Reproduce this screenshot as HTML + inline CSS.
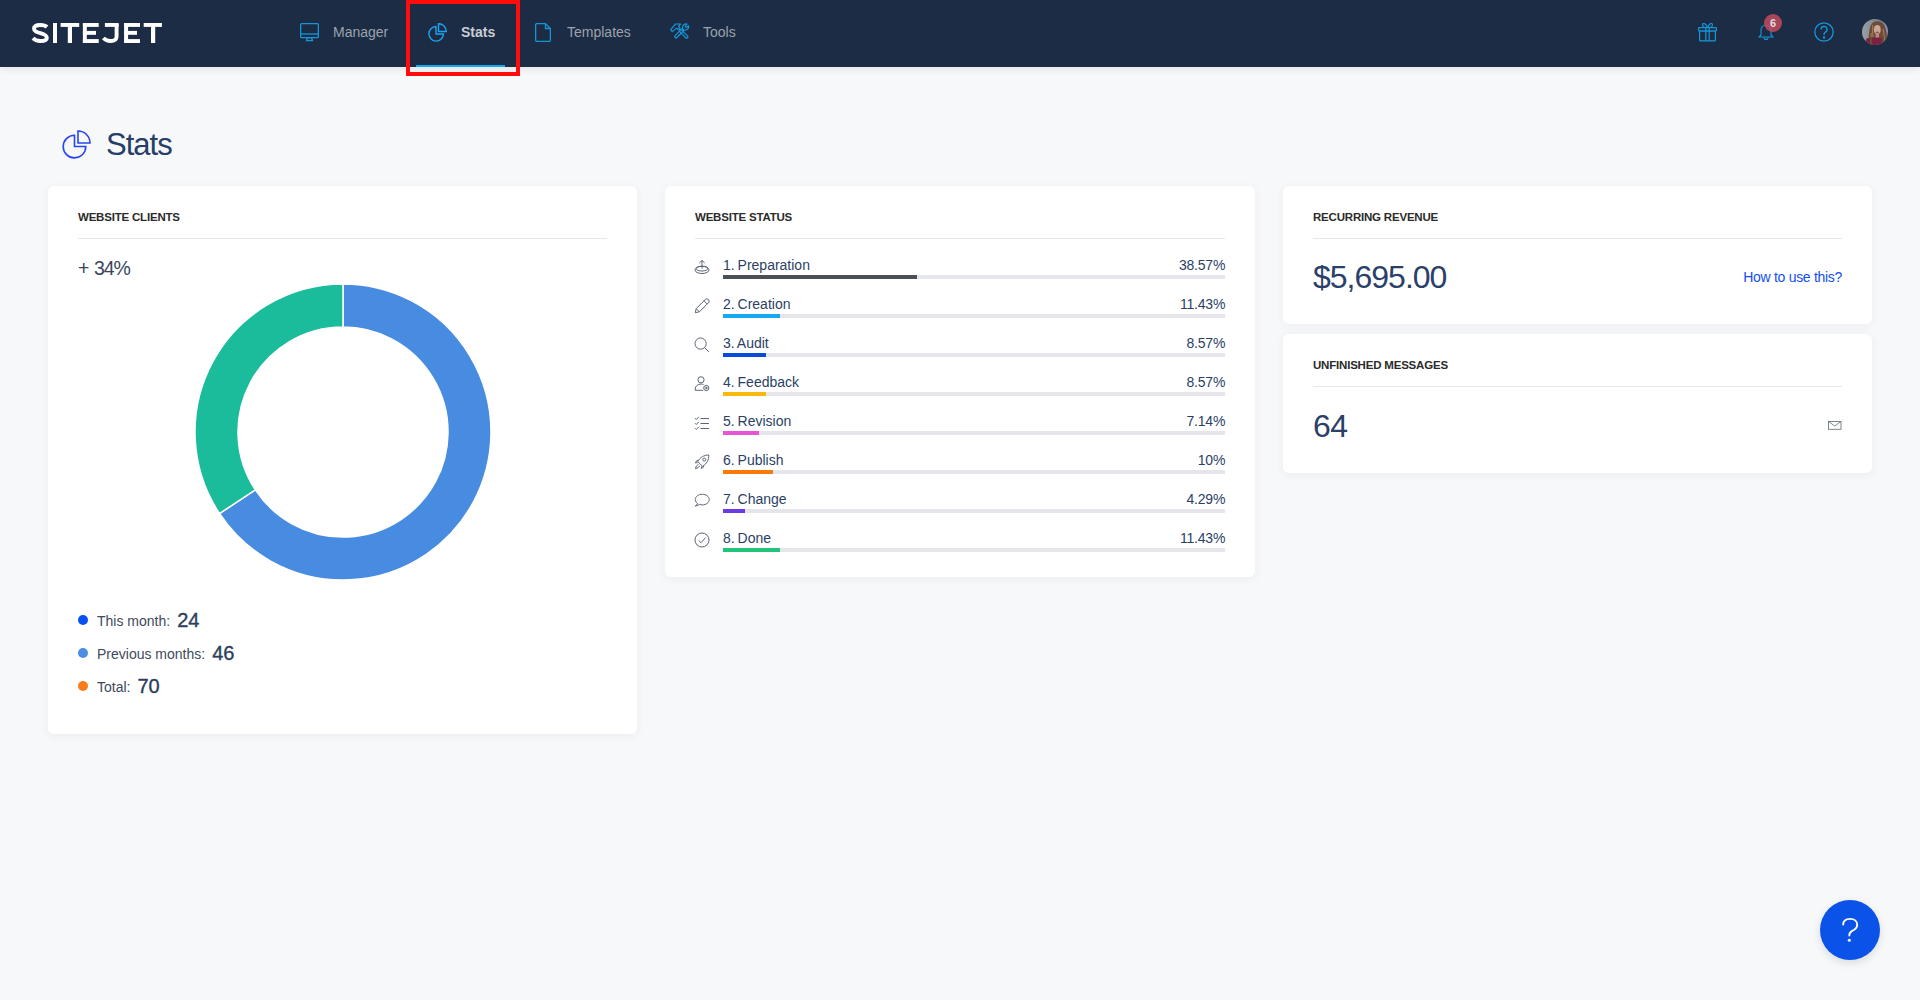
<!DOCTYPE html>
<html><head><meta charset="utf-8">
<style>
*{margin:0;padding:0;box-sizing:border-box}
html,body{width:1920px;height:1000px;overflow:hidden;background:#f7f8fa;font-family:"Liberation Sans",sans-serif;position:relative}
.abs{position:absolute}
#hdr{position:absolute;left:0;top:0;width:1920px;height:67px;background:#1c2c44;box-shadow:0 2px 8px rgba(0,0,0,.09)}
.logo{position:absolute;left:31px;top:16px;font-size:30px;font-weight:bold;color:#fff;letter-spacing:1.6px;line-height:34px}
.nav{position:absolute;top:0;height:67px;line-height:64px;font-size:14px;color:#9aa3ae;white-space:nowrap}
.nav svg{position:absolute}
.card{position:absolute;background:#fff;border-radius:6px;box-shadow:0 2px 10px rgba(40,50,70,.06)}
.ct{position:absolute;left:30px;top:24px;font-size:11.5px;font-weight:bold;color:#2b2b2b;line-height:14px;text-transform:uppercase;letter-spacing:-0.2px}
.cd{position:absolute;left:30px;right:30px;top:52px;height:1px;background:#e4e6eb}
.row{position:absolute;left:30px;right:30px;height:30px}
.row .lb{position:absolute;left:28px;top:0;font-size:14px;color:#2b3f66;line-height:16px;word-spacing:-1px;white-space:nowrap}
.row .pc{position:absolute;right:-0.2px;top:0;font-size:14px;color:#2b3f66;line-height:16px;letter-spacing:-0.2px}
.row .bar{position:absolute;left:28px;right:0;top:18px;height:4px;background:#e4e6eb}
.row .bar i{position:absolute;left:0;top:0;height:4px}
.row svg{position:absolute;left:0;top:-2px}
.leg{position:absolute;left:30px;font-size:14px;color:#3d4a5c;line-height:20px;white-space:nowrap}
.leg b{font-size:20px;font-weight:normal;-webkit-text-stroke:0.35px #2c3e5c;color:#2c3e5c;margin-left:7px}
.leg i{position:absolute;left:0;top:5px;width:10px;height:10px;border-radius:50%}
.leg span{margin-left:19px;position:relative;top:-1px}
</style></head><body>
<div id="hdr">
  <svg class="abs" style="left:0;top:0" width="170" height="60" viewBox="0 0 170 60"><g fill="#fff"><rect x="53" y="23" width="4" height="20"/><rect x="60.6" y="23" width="18.6" height="3.9"/><rect x="67.8" y="23" width="4.2" height="20"/><rect x="82.9" y="23" width="3.9" height="20"/><rect x="82.9" y="23" width="15.8" height="3.9"/><rect x="82.9" y="30.9" width="13.1" height="3.9"/><rect x="82.9" y="39.1" width="15.8" height="3.9"/><rect x="104.9" y="23" width="13.7" height="3.9"/><rect x="124.1" y="23" width="4" height="20"/><rect x="124.1" y="23" width="15.9" height="3.9"/><rect x="124.1" y="30.9" width="12.9" height="3.9"/><rect x="124.1" y="39.1" width="15.9" height="3.9"/><rect x="143.7" y="23" width="18.2" height="3.9"/><rect x="151" y="23" width="4.2" height="20"/></g><g fill="none" stroke="#fff" stroke-width="3.9"><path d="M47 27 C45.3 25.3 43.2 24.95 40.4 24.95 C37.2 24.95 34 26 34 28.7 C34 31.5 37 32.3 40.5 33.2 C44.5 34.2 46.8 35.3 46.8 38 C46.8 40.6 43.8 41.05 40.3 41.05 C37.2 41.05 35 40.3 33 38.2"/><path d="M116.6 24 V36.5 C116.6 40 114.2 41.05 110.5 41.05 C107.2 41.05 105.2 40 103.4 38"/></g></svg>
  <!-- Manager -->
  <div class="nav" style="left:300px;width:100px">
    <svg style="left:0;top:23px" width="19" height="19" viewBox="0 0 19 19" fill="none" stroke="#1696d8" stroke-width="1.3"><rect x="0.65" y="0.65" width="17.7" height="14" rx="1"/><line x1="0.65" y1="11" x2="18.35" y2="11"/><path d="M6.5 17.7 L7.5 14.7 H11.5 L12.5 17.7 Z"/></svg>
    <span style="position:absolute;left:33px">Manager</span>
  </div>
  <!-- Stats -->
  <div class="nav" style="left:428px;width:90px">
    <svg style="left:0;top:23px" width="19" height="19" viewBox="0 0 19 19" fill="none" stroke="#1aa3f0" stroke-width="1.4"><path d="M8 3.5 A7.3 7.3 0 1 0 15.5 11 H8 Z"/><path d="M10.5 0.8 A7.5 7.5 0 0 1 18.2 8.5 H10.5 Z"/></svg>
    <span style="position:absolute;left:33px;font-weight:bold;color:#c8cdd5">Stats</span>
  </div>
  <div class="abs" style="left:416px;top:65px;width:89px;height:2px;background:#13aaf2"></div>
  <!-- Templates -->
  <div class="nav" style="left:535px;width:110px">
    <svg style="left:0;top:23px" width="16" height="19" viewBox="0 0 16 19" fill="none" stroke="#1696d8" stroke-width="1.3"><path d="M1.65 0.65 H10.5 L15.35 5.5 V17.35 A1 1 0 0 1 14.35 18.35 H1.65 A1 1 0 0 1 0.65 17.35 V1.65 A1 1 0 0 1 1.65 0.65 Z"/><path d="M10.5 0.65 V5.5 H15.35"/></svg>
    <span style="position:absolute;left:32px">Templates</span>
  </div>
  <!-- Tools -->
  <div class="nav" style="left:670px;width:80px">
    <svg style="left:0;top:23px" width="20" height="17" viewBox="0 0 20 17" fill="none" stroke="#1696d8" stroke-width="1.2" stroke-linejoin="round"><path d="M5.6 1 H10.6 L8.6 3.2 L9.8 4.6 L8 6.4 L6.6 5.1 L2.3 8.6 L0.6 6.7 Z"/><rect x="-1.3" y="0" width="2.6" height="11.5" rx="1.3" transform="translate(9.4 6.6) rotate(-45)"/><rect x="-1.3" y="0" width="2.6" height="11.5" rx="1.3" transform="translate(13.2 6.4) rotate(45)"/><path d="M13.2 6.4 C12 5 12.2 2.4 14 1.4 C15 0.8 16.2 0.8 17 1.1 L15 3.1 L16.4 4.6 L18.4 2.6 C18.8 3.6 18.6 5 17.8 5.9 C16.8 7 15 7.4 13.2 6.4"/></svg>
    <span style="position:absolute;left:33px">Tools</span>
  </div>
  <!-- red box -->
  <div class="abs" style="left:406px;top:0;width:114px;height:76px;border:4px solid #ff0d0d"></div>

  <!-- right icons -->
  <svg class="abs" style="left:1698px;top:22px" width="19" height="20" viewBox="0 0 19 20" fill="none" stroke="#1696d8" stroke-width="1.2"><rect x="0.6" y="5.6" width="17.8" height="3.4" rx="0.5"/><rect x="1.6" y="9" width="15.8" height="9.8" rx="0.5"/><path d="M7.8 5.6 V18.8 M11.2 5.6 V18.8"/><path d="M9.5 5.4 C8.5 3 6.8 1.2 5.3 1.6 C4 2 4.4 4.6 6.4 5.4 M9.5 5.4 C10.5 3 12.2 1.2 13.7 1.6 C15 2 14.6 4.6 12.6 5.4"/></svg>
  <svg class="abs" style="left:1758px;top:23px" width="16" height="18" viewBox="0 0 16 18" fill="none" stroke="#1696d8" stroke-width="1.1"><path d="M1 14 H15 L13 12 V7 A5 5 0 0 0 3 7 V12 Z"/><path d="M6 14.5 A2 2 0 0 0 10 14.5"/></svg>
  <div class="abs" style="left:1764px;top:14px;width:18px;height:18px;border-radius:50%;background:rgba(196,74,92,.85);color:#dddde0;font-size:11px;font-weight:bold;text-align:center;line-height:18px">6</div>
  <svg class="abs" style="left:1814px;top:22px" width="20" height="20" viewBox="0 0 20 20" fill="none" stroke="#1696d8" stroke-width="1.3"><circle cx="10" cy="10" r="9.2"/><path d="M7 7.5 A3 3 0 1 1 11 10.3 C10 10.8 10 11.5 10 13"/><circle cx="10" cy="15.5" r="0.6" fill="#1696d8"/></svg>
  <svg class="abs" style="left:1862px;top:19px" width="26" height="26" viewBox="0 0 26 26"><defs><clipPath id="av"><circle cx="13" cy="13" r="13"/></clipPath><linearGradient id="avbg" x1="0" x2="1"><stop offset="0" stop-color="#9aa0a6"/><stop offset="0.6" stop-color="#7b838c"/></linearGradient></defs><g clip-path="url(#av)"><rect width="26" height="26" fill="url(#avbg)"/><ellipse cx="24" cy="8" rx="4" ry="6" fill="#8e88b8"/><path d="M7.5 26 C6 20 7 12 8.5 7 C10 3 13 1.8 16 2.2 C20 2.6 22.5 5 23.5 9 C25 14 25.5 20 24 26 Z" fill="#6b4c36"/><path d="M9 14 C9.5 18 8.5 22 9.5 26 M21 10 C22 14 23 18 22 24 M11 6 C10 10 10.5 14 11 18" stroke="#a07a55" stroke-width="1.2" fill="none"/><ellipse cx="15.3" cy="10.5" rx="3.4" ry="4.6" fill="#c9a89a"/><path d="M13.8 13.2 H16.8" stroke="#8a2a35" stroke-width="1.1"/><rect x="13.6" y="14.5" width="3.4" height="5" fill="#b48e80"/><path d="M3 26 L4.5 19.5 C9 18.5 17 18.3 20.5 19 L21 26 Z" fill="#7b2142"/><path d="M9 18 C8.5 21 9 24 9.5 26 M20.5 17 C21 20 21 23 20.5 26" stroke="#6b4c36" stroke-width="2.2" fill="none"/></g></svg>
</div>

<!-- page title -->
<svg class="abs" style="left:62px;top:130px" width="29" height="29" viewBox="0 0 29 29" fill="none" stroke="#2a45f0" stroke-width="1.6"><path d="M12.5 5.3 A11.3 11.3 0 1 0 23.8 16.5 H12.5 Z"/><path d="M16 1 A12 12 0 0 1 28 13 H16 Z"/></svg>
<div class="abs" style="left:106px;top:127px;font-size:31px;color:#263e68;line-height:36px;letter-spacing:-1px">Stats</div>

<!-- card 1 -->
<div class="card" style="left:48px;top:186px;width:589px;height:548px">
  <div class="ct">Website Clients</div>
  <div class="cd"></div>
  <div class="abs" style="left:30px;top:71px;font-size:19.5px;color:#3a4660;line-height:22px;letter-spacing:-1.1px;word-spacing:1.5px">+ 34%</div>
  <svg class="abs" style="left:145px;top:97px" width="300" height="300" viewBox="0 0 300 300">
    <path d="M150.00 1.00 A148 148 0 1 1 26.48 230.53 L62.37 206.84 A105 105 0 1 0 150.00 44.00 Z" fill="#488ce2" stroke="#fff" stroke-width="1.5"/>
    <path d="M26.48 230.53 A148 148 0 0 1 150.00 1.00 L150.00 44.00 A105 105 0 0 0 62.37 206.84 Z" fill="#1abc9c" stroke="#fff" stroke-width="1.5"/>
  </svg>
  <div class="leg" style="top:424px"><i style="background:#0a4ff0"></i><span>This month:</span><b>24</b></div>
  <div class="leg" style="top:457px"><i style="background:#4a8fe3"></i><span>Previous months:</span><b>46</b></div>
  <div class="leg" style="top:490px"><i style="background:#f97d1a"></i><span>Total:</span><b>70</b></div>
</div>

<!-- card 2 -->
<div class="card" style="left:665px;top:186px;width:590px;height:391px">
  <div class="ct">Website Status</div>
  <div class="cd"></div>
  <div class="row" style="top:71px"><svg style="left:-1px;top:2px" width="16" height="16" viewBox="0 0 16 16" fill="none" stroke="#5d6575" stroke-width="1"><ellipse cx="8" cy="10.9" rx="7" ry="3.6"/><ellipse cx="8" cy="9.6" rx="5.8" ry="2.4"/><path d="M8 9.6 V1.4 M5.3 4 L8 1.4 L10.7 4"/></svg><div class="lb">1. Preparation</div><div class="pc">38.57%</div><div class="bar"><i style="width:38.57%;background:#4b5054"></i></div></div>
  <div class="row" style="top:110px"><svg style="left:-1px;top:2px" width="16" height="16" viewBox="0 0 16 16" fill="none" stroke="#5d6575" stroke-width="1"><path d="M1.3 14.7 L2.2 10.6 L11.3 1.5 A1.8 1.8 0 0 1 14.5 4.7 L5.4 13.8 Z M2.2 10.6 L5.4 13.8 M10 2.8 L13.2 6"/></svg><div class="lb">2. Creation</div><div class="pc">11.43%</div><div class="bar"><i style="width:11.43%;background:#16a9f2"></i></div></div>
  <div class="row" style="top:149px"><svg style="left:-1px;top:2px" width="16" height="16" viewBox="0 0 16 16" fill="none" stroke="#5d6575" stroke-width="1"><circle cx="6.6" cy="6.6" r="5.6"/><path d="M10.6 10.6 L14.8 14.8"/></svg><div class="lb">3. Audit</div><div class="pc">8.57%</div><div class="bar"><i style="width:8.57%;background:#0a4bdc"></i></div></div>
  <div class="row" style="top:188px"><svg style="left:-1px;top:2px" width="16" height="16" viewBox="0 0 16 16" fill="none" stroke="#5d6575" stroke-width="1"><circle cx="7" cy="3.8" r="3.1"/><path d="M9.6 8.6 C8.9 8.2 8 8 7 8 C3.8 8 1.2 10.2 1.2 13 V14.3 H9.2"/><circle cx="12.3" cy="12" r="2.6"/><path d="M12.3 10.6 V13.4 M10.9 12 H13.7"/></svg><div class="lb">4. Feedback</div><div class="pc">8.57%</div><div class="bar"><i style="width:8.57%;background:#f9b80c"></i></div></div>
  <div class="row" style="top:227px"><svg style="left:-1px;top:2px" width="16" height="16" viewBox="0 0 16 16" fill="none" stroke="#5d6575" stroke-width="1"><path d="M6.5 3.5 H15 M6.5 8.5 H15 M6.5 13.5 H15 M1 3.2 L2.3 4.5 L4.8 1.8 M1 8.2 L2.3 9.5 L4.8 6.8 M1 13.2 L2.3 14.5 L4.8 11.8"/></svg><div class="lb">5. Revision</div><div class="pc">7.14%</div><div class="bar"><i style="width:7.14%;background:#e852d4"></i></div></div>
  <div class="row" style="top:266px"><svg style="left:-1px;top:2px" width="16" height="16" viewBox="0 0 16 16" fill="none" stroke="#5d6575" stroke-width="1"><path d="M14.8 1 C14.8 6 12.8 9.8 8.6 12.4 L3.7 7.5 C6.4 3.2 10 1 14.8 1 Z"/><circle cx="10.3" cy="5.6" r="1.5"/><path d="M4.4 6.5 L2.6 6.8 L1.4 8.9 L3.6 8.6 M9.6 11.6 L9.4 13.2 L7.4 14.6 L7.6 12.5"/><path d="M4.4 10.6 C3.2 10.8 2 12 1.5 14.6 C4.1 14.1 5.2 13 5.5 11.7"/></svg><div class="lb">6. Publish</div><div class="pc">10%</div><div class="bar"><i style="width:10.00%;background:#f97a0c"></i></div></div>
  <div class="row" style="top:305px"><svg style="left:-1px;top:2px" width="16" height="16" viewBox="0 0 16 16" fill="none" stroke="#5d6575" stroke-width="1"><path d="M3.6 10.6 C2.2 9.7 1.3 8.2 1.3 6.6 C1.3 3.6 4.4 1.3 8.3 1.3 C12.2 1.3 15.2 3.6 15.2 6.6 C15.2 9.6 12.2 11.9 8.3 11.9 C7.3 11.9 6.4 11.7 5.6 11.5 L1.3 13.2 Z"/></svg><div class="lb">7. Change</div><div class="pc">4.29%</div><div class="bar"><i style="width:4.29%;background:#6a3be4"></i></div></div>
  <div class="row" style="top:344px"><svg style="left:-1px;top:2px" width="16" height="16" viewBox="0 0 16 16" fill="none" stroke="#5d6575" stroke-width="1"><circle cx="8" cy="8" r="7"/><path d="M4.6 8.3 L7 10.7 L11.5 5.6"/></svg><div class="lb">8. Done</div><div class="pc">11.43%</div><div class="bar"><i style="width:11.43%;background:#22c47a"></i></div></div>
</div>

<!-- card 3 -->
<div class="card" style="left:1283px;top:186px;width:589px;height:138px">
  <div class="ct">Recurring Revenue</div>
  <div class="cd"></div>
  <div class="abs" style="left:30px;top:73px;font-size:32px;color:#2a4068;line-height:36px;letter-spacing:-1px">$5,695.00</div>
  <div class="abs" style="right:30px;top:83px;font-size:14px;color:#1250ee;line-height:16px;letter-spacing:-0.3px">How to use this?</div>
</div>

<!-- card 4 -->
<div class="card" style="left:1283px;top:334px;width:589px;height:139px">
  <div class="ct">Unfinished Messages</div>
  <div class="cd"></div>
  <div class="abs" style="left:30px;top:74px;font-size:32px;color:#2a4068;line-height:36px;letter-spacing:-0.5px">64</div>
  <svg class="abs" style="left:545px;top:87px" width="14" height="9" viewBox="0 0 14 9" fill="none" stroke="#6f7785" stroke-width="0.9"><rect x="0.5" y="0.5" width="12.5" height="7.8"/><path d="M0.5 0.5 L6.75 5 L13 0.5"/></svg>
</div>

<!-- help button -->
<div class="abs" style="left:1820px;top:900px;width:60px;height:60px;border-radius:50%;background:#0a52e8;box-shadow:0 3px 8px rgba(0,0,0,.12)"><svg class="abs" style="left:0;top:0" width="60" height="60" viewBox="0 0 60 60" fill="none" stroke="#fff" stroke-width="1.9" stroke-linecap="round"><path d="M23.2 24.6 C23.2 20.8 26.2 18.9 30.2 18.9 C34.2 18.9 37.2 21.3 37.2 24.9 C37.2 28 34.6 29.6 32.2 30.8 C30.2 31.8 29.3 33 29.3 35.6"/><circle cx="29.3" cy="40.3" r="1.5" fill="#fff" stroke="none"/></svg></div>
</body></html>
